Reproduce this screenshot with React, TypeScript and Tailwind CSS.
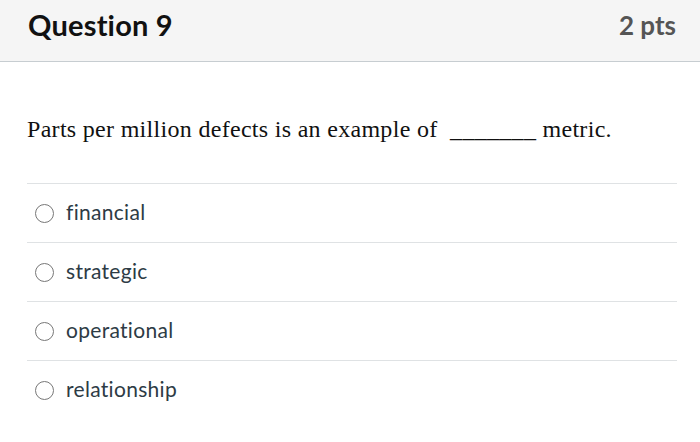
import React from "react";

const options = ["financial", "strategic", "operational", "relationship"];

export default function App() {
  return (
    <div className="w-[700px] h-[442px] bg-white overflow-hidden" style={{ fontFamily: "Lato, 'Noto Sans', sans-serif" }}>
      <div className="h-[62px] bg-[#f5f5f5] border-b border-[#c7cdd1] flex items-center justify-between pl-[28px] pr-[24px]">
        <div className="text-[29px] font-bold text-[#111] leading-none tracking-[0.2px] -mt-[12px]">Question 9</div>
        <div className="text-[26px] font-bold text-[#555] leading-none -mt-[12px]">2 pts</div>
      </div>
      <div className="pl-[27px] pr-[23px]">
        <div className="pt-[53px] pb-[40px] text-[24px] text-[#111] leading-[28px] tracking-[0.3px]" style={{ fontFamily: "'Liberation Serif', 'Times New Roman', serif" }}>
          Parts per million defects is an example of&nbsp;&nbsp;_______&nbsp;metric.
        </div>
        <div className="border-t border-[#dfe2e4]">
          {options.map((o, i) => (
            <div key={o} className={`h-[59px] flex items-center pl-[8px] ${i < options.length - 1 ? "border-b border-[#dfe2e4]" : ""}`}>
              <span className="w-[19px] h-[19px] rounded-full border border-[#777] bg-white shrink-0" />
              <span className="ml-[12px] text-[21px] text-[#2d3b45] leading-none tracking-[0.3px] -mt-[4px]">{o}</span>
            </div>
          ))}
        </div>
      </div>
    </div>
  );
}
